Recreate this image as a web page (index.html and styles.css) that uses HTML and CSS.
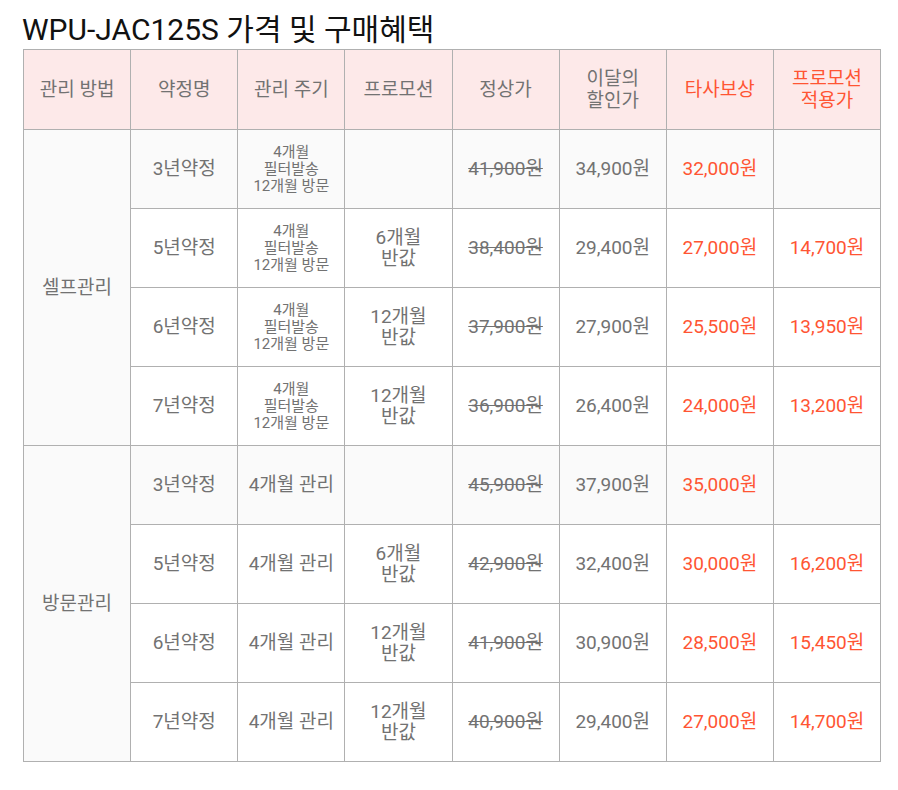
FILE: index.html
```html
<!DOCTYPE html>
<html lang="ko">
<head>
<meta charset="utf-8">
<link rel="stylesheet" href="styles.css">
</head>
<body>
<h2 class="title">WPU-JAC125S 가격 및 구매혜택</h2>
<table class="price">
  <thead>
    <tr>
      <th>관리 방법</th>
      <th>약정명</th>
      <th>관리 주기</th>
      <th>프로모션</th>
      <th>정상가</th>
      <th>이달의<br>할인가</th>
      <th class="red">타사보상</th>
      <th class="red">프로모션<br>적용가</th>
    </tr>
  </thead>
  <tbody>
    <tr class="first">
      <td rowspan="4">셀프관리</td>
      <td>3년약정</td>
      <td class="small">4개월<br>필터발송<br>12개월 방문</td>
      <td></td>
      <td class="strike">41,900원</td>
      <td>34,900원</td>
      <td class="red">32,000원</td>
      <td></td>
    </tr>
    <tr>
      <td>5년약정</td>
      <td class="small">4개월<br>필터발송<br>12개월 방문</td>
      <td class="two">6개월<br>반값</td>
      <td class="strike">38,400원</td>
      <td>29,400원</td>
      <td class="red">27,000원</td>
      <td class="red">14,700원</td>
    </tr>
    <tr>
      <td>6년약정</td>
      <td class="small">4개월<br>필터발송<br>12개월 방문</td>
      <td class="two">12개월<br>반값</td>
      <td class="strike">37,900원</td>
      <td>27,900원</td>
      <td class="red">25,500원</td>
      <td class="red">13,950원</td>
    </tr>
    <tr>
      <td>7년약정</td>
      <td class="small">4개월<br>필터발송<br>12개월 방문</td>
      <td class="two">12개월<br>반값</td>
      <td class="strike">36,900원</td>
      <td>26,400원</td>
      <td class="red">24,000원</td>
      <td class="red">13,200원</td>
    </tr>
    <tr class="first">
      <td rowspan="4">방문관리</td>
      <td>3년약정</td>
      <td>4개월 관리</td>
      <td></td>
      <td class="strike">45,900원</td>
      <td>37,900원</td>
      <td class="red">35,000원</td>
      <td></td>
    </tr>
    <tr>
      <td>5년약정</td>
      <td>4개월 관리</td>
      <td class="two">6개월<br>반값</td>
      <td class="strike">42,900원</td>
      <td>32,400원</td>
      <td class="red">30,000원</td>
      <td class="red">16,200원</td>
    </tr>
    <tr>
      <td>6년약정</td>
      <td>4개월 관리</td>
      <td class="two">12개월<br>반값</td>
      <td class="strike">41,900원</td>
      <td>30,900원</td>
      <td class="red">28,500원</td>
      <td class="red">15,450원</td>
    </tr>
    <tr>
      <td>7년약정</td>
      <td>4개월 관리</td>
      <td class="two">12개월<br>반값</td>
      <td class="strike">40,900원</td>
      <td>29,400원</td>
      <td class="red">27,000원</td>
      <td class="red">14,700원</td>
    </tr>
  </tbody>
</table>
</body>
</html>
```

FILE: styles.css
```css
html, body {
  margin: 0;
  padding: 0;
  background: #ffffff;
}
body {
  padding: 11px 0 0 23px;
  font-family: Roboto, "Noto Sans CJK KR", sans-serif;
  color: #777777;
}
.title {
  margin: 0 0 0 -1px;
  height: 38px;
  line-height: 38px;
  font-size: 30px;
  font-weight: 400;
  color: #111111;
  letter-spacing: 0;
}
.price {
  width: 858px;
  table-layout: fixed;
  border-collapse: collapse;
  border: 1px solid #b0b0b0;
}
.price th,
.price td {
  border: 1px solid #b0b0b0;
  text-align: center;
  vertical-align: middle;
  padding: 0;
  font-size: 19px;
  line-height: 20px;
  color: #727272;
}
.price th {
  height: 79px;
  background: #fde9e9;
  font-weight: 400;
  line-height: 22px;
}
.price td {
  height: 78px;
  background: #ffffff;
  font-weight: 400;
}
.price tr.first td {
  background: #fafafa;
}
.price .red {
  color: #ff5533;
}
.price .small {
  font-size: 15px;
  line-height: 17px;
}
.price .two {
  line-height: 21px;
}
.price .strike {
  text-decoration: line-through;
}
```
